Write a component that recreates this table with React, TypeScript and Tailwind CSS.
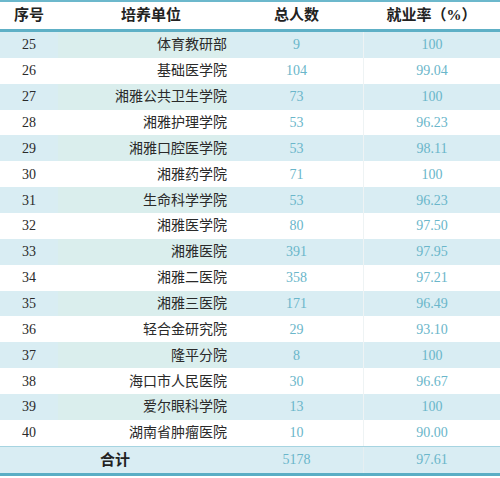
import React from "react";

const rows: [string, string, string, string][] = [
  ["25", "体育教研部", "9", "100"],
  ["26", "基础医学院", "104", "99.04"],
  ["27", "湘雅公共卫生学院", "73", "100"],
  ["28", "湘雅护理学院", "53", "96.23"],
  ["29", "湘雅口腔医学院", "53", "98.11"],
  ["30", "湘雅药学院", "71", "100"],
  ["31", "生命科学学院", "53", "96.23"],
  ["32", "湘雅医学院", "80", "97.50"],
  ["33", "湘雅医院", "391", "97.95"],
  ["34", "湘雅二医院", "358", "97.21"],
  ["35", "湘雅三医院", "171", "96.49"],
  ["36", "轻合金研究院", "29", "93.10"],
  ["37", "隆平分院", "8", "100"],
  ["38", "海口市人民医院", "30", "96.67"],
  ["39", "爱尔眼科学院", "13", "100"],
  ["40", "湖南省肿瘤医院", "10", "90.00"],
];

export default function App() {
  return (
    <div
      className="w-[500px] h-[478px] bg-white text-[#2a2a2a]"
      style={{ fontFamily: '"Liberation Serif", "Noto Sans CJK SC", serif' }}
    >
      <div className="border-t-2 border-b-[3px] border-t-[#6cb8cc] border-b-[#5eb0c6] h-[32px] flex items-center text-[15px] font-bold text-[#222]">
        <div className="w-[58px] text-center">序号</div>
        <div className="w-[172px] text-center pl-[14px]">培养单位</div>
        <div className="w-[133px] text-center">总人数</div>
        <div className="flex-1 text-center">就业率（%）</div>
      </div>
      {rows.map((r, i) => (
        <div
          key={r[0]}
          className={`h-[25.86px] flex items-center text-[14px] ${
            i % 2 === 0 ? "bg-[#d9edf3]" : "bg-white"
          }`}
        >
          <div className="w-[58px] text-center">{r[0]}</div>
          <div
            className={`w-[172px] h-full flex items-center justify-end pr-[3px] ${
              i % 2 === 0 ? "bg-[#daeeed]" : "bg-white"
            }`}
          >
            {r[1]}
          </div>
          <div className="w-[133px] text-center text-[#6ab6ca]">{r[2]}</div>
          <div className="flex-1 h-full flex items-center justify-center border-l border-[#eef3f4] text-[#6ab6ca]">
            {r[3]}
          </div>
        </div>
      ))}
      <div className="h-[30px] border-t-[1.5px] border-b-[3px] border-t-[#a6d4e1] border-b-[#5aaec5] bg-[#d9edf3] flex items-center text-[14px]">
        <div className="w-[230px] text-center font-bold text-[15px] text-[#222]">合计</div>
        <div className="w-[133px] text-center text-[#6ab6ca]">5178</div>
        <div className="flex-1 h-full flex items-center justify-center border-l border-[#e6eff1] text-[#6ab6ca]">
          97.61
        </div>
      </div>
    </div>
  );
}
